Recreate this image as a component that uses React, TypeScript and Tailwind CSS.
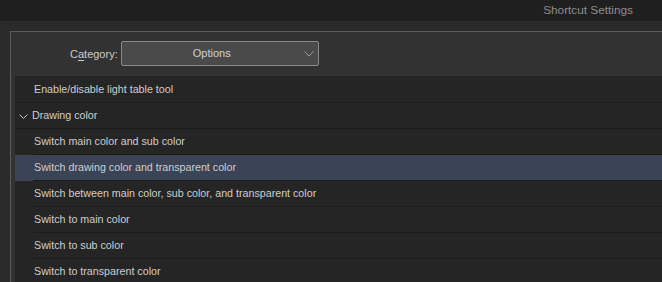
import React from "react";

type Row = { label: string; kind: "item" | "group" | "child"; selected?: boolean };

const ROWS: Row[] = [
  { label: "Enable/disable light table tool", kind: "item" },
  { label: "Drawing color", kind: "group" },
  { label: "Switch main color and sub color", kind: "child" },
  { label: "Switch drawing color and transparent color", kind: "child", selected: true },
  { label: "Switch between main color, sub color, and transparent color", kind: "child" },
  { label: "Switch to main color", kind: "child" },
  { label: "Switch to sub color", kind: "child" },
  { label: "Switch to transparent color", kind: "child" },
];

function ListRow({ row }: { row: Row }) {
  const indent = row.kind === "child";
  return (
    <div className={`flex h-[26px] ${row.selected ? "bg-[#3a4456]" : ""}`}>
      <div
        className={`flex flex-1 items-center border-b border-[#1b1b1b] ${
          indent ? "ml-[18px] pl-[1px]" : row.kind === "group" ? "pl-[4px]" : "pl-[19px]"
        }`}
      >
        {row.kind === "group" ? (
          <svg width="9" height="6" viewBox="0 0 9 6" className="mr-[4px] mt-[2px]">
            <path d="M0.5 0.5 L4.5 4.5 L8.5 0.5" stroke="#c8c8c8" strokeWidth="1" fill="none" />
          </svg>
        ) : null}
        <span className="whitespace-nowrap">{row.label}</span>
      </div>
    </div>
  );
}

export default function App() {
  return (
    <div className="h-[282px] w-[662px] overflow-hidden bg-[#2b2b2b] font-['Liberation_Sans',Arial,sans-serif] text-[10.7px] text-[#cdcdcd]">
      <header className="flex h-[21px] items-center justify-end bg-[#1f1f1f] pr-[29px] text-[11.8px] text-[#8e8e8e]">
        Shortcut Settings
      </header>

      <div className="pl-[10px] pt-[10px]">
        <section className="border-l border-t border-[#5c5c5c] bg-[#323232]">
          <div className="flex h-[44px] items-start pt-[9px]">
            <label className="ml-[59px] mr-[3px] mt-[5px] text-[11px] text-[#cbcbcb]">
              C<span className="underline underline-offset-2">a</span>tegory:
            </label>
            <div className="relative flex h-[25px] w-[198px] items-center justify-center rounded-[2px] border border-[#8a8a8a] bg-[#4a4a4a] pr-[16px] text-[11px] text-[#d2d2d2]">
              Options
              <svg width="10" height="6" viewBox="0 0 10 6" className="absolute right-[4px] top-[9px]">
                <path d="M0.5 0.5 L5 5 L9.5 0.5" stroke="#9c9c9c" strokeWidth="1" fill="none" />
              </svg>
            </div>
          </div>

          <div className="ml-[4px] bg-[#252525] pt-[1px]">
            {ROWS.map((r) => (
              <ListRow key={r.label} row={r} />
            ))}
          </div>
        </section>
      </div>
    </div>
  );
}
